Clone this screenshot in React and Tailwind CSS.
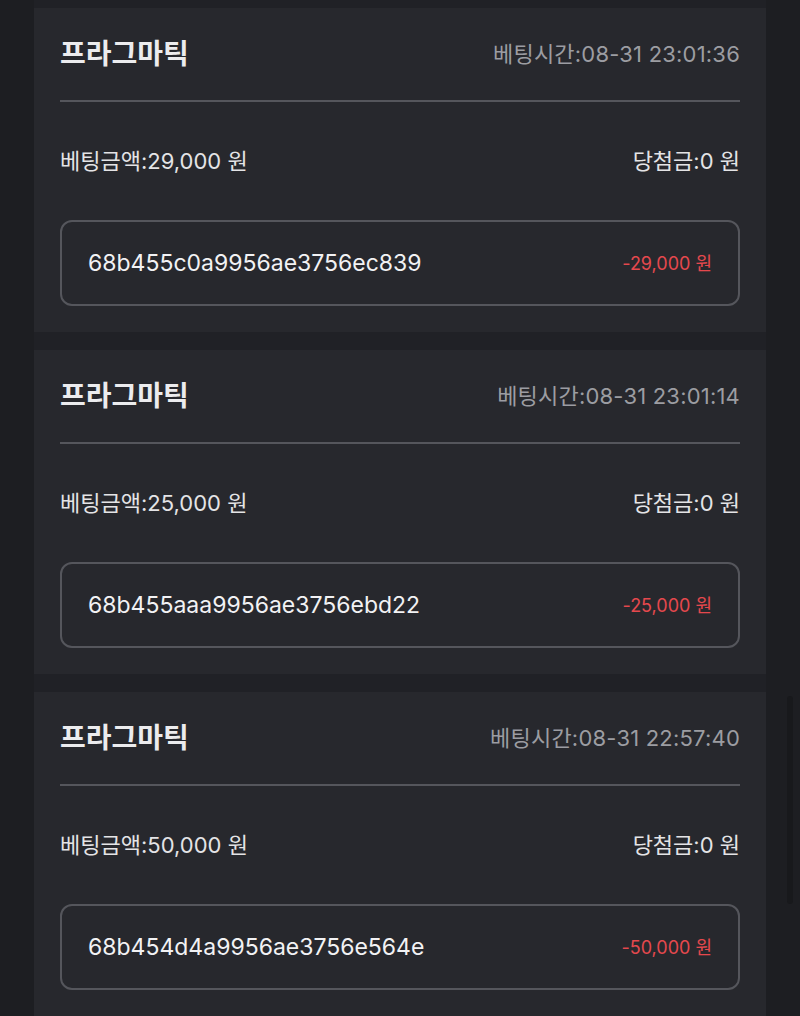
const bets = [
  { time: '08-31 23:01:36', amount: '29,000', id: '68b455c0a9956ae3756ec839' },
  { time: '08-31 23:01:14', amount: '25,000', id: '68b455aaa9956ae3756ebd22' },
  { time: '08-31 22:57:40', amount: '50,000', id: '68b454d4a9956ae3756e564e' },
];

function BetCard({ bet }) {
  return (
    <div className="bg-[#27282d] px-[26px] pb-[26px]">
      <div className="flex h-[94px] items-center justify-between border-b-2 border-[#55565c]">
        <span className="text-[28px] font-semibold text-[#ececee]">프라그마틱</span>
        <span className="text-[22px] tracking-[0.2px] text-[#9c9da2]">베팅시간:{bet.time}</span>
      </div>
      <div className="flex h-[118px] items-center justify-between text-[22px] text-[#e4e4e6]">
        <span>베팅금액:{bet.amount} 원</span>
        <span>당첨금:0 원</span>
      </div>
      <div className="flex h-[86px] items-center justify-between rounded-[12px] border-2 border-[#55565c] px-[26px]">
        <span className="text-[23px] text-[#f2f2f4]">{bet.id}</span>
        <span className="text-[18px] text-[#e5484d]">-{bet.amount} 원</span>
      </div>
    </div>
  );
}

export default function App() {
  return (
    <div
      className="relative h-[1016px] overflow-hidden bg-[#1d1e22]"
      style={{ fontFamily: 'Inter, "Noto Sans CJK KR", sans-serif' }}
    >
      <div className="mx-[34px] flex flex-col gap-[18px] bg-[#202126] pt-[8px]">
        {bets.map((b) => (
          <BetCard key={b.id} bet={b} />
        ))}
      </div>
      <div className="absolute left-[787px] top-[696px] h-[208px] w-[6px] rounded-full bg-[#18191c]" />
    </div>
  );
}
